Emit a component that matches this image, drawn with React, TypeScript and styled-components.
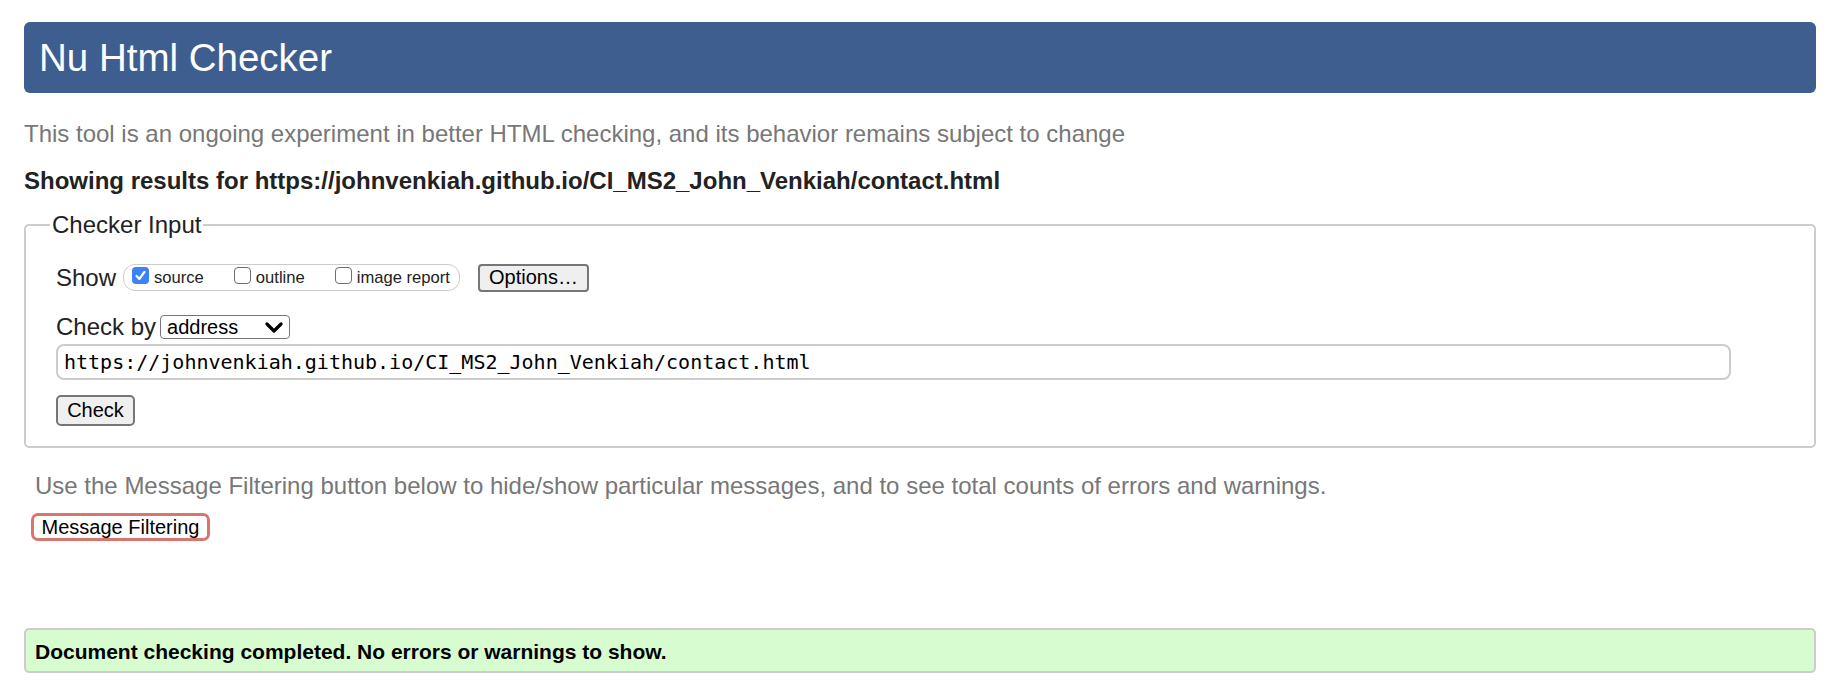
import React from 'react';
import styled, { createGlobalStyle } from 'styled-components';

const GlobalStyle = createGlobalStyle`
  html, body {
    margin: 0;
    background: #fff;
  }
  body {
    font-family: "Liberation Sans", Arial, Helvetica, sans-serif;
    color: #222;
  }
`;

const Page = styled.main`
  padding: 22px 18px 0 24px;
`;

const Header = styled.header`
  display: flex;
  align-items: center;
  height: 71px;
  padding-left: 15px;
  background: #3d5e8f;
  border-radius: 6px;
`;

const Title = styled.h1`
  margin: 0;
  font-size: 38.5px;
  font-weight: normal;
  color: #fff;
`;

const Text = styled.p<{ $bold?: boolean; $muted?: boolean; $top: number; $indent?: number }>`
  margin: ${(p) => p.$top}px 0 0;
  padding-left: ${(p) => p.$indent ?? 0}px;
  font-size: 24px;
  line-height: 26px;
  font-weight: ${(p) => (p.$bold ? 700 : 400)};
  color: ${(p) => (p.$muted ? '#777' : '#222')};
`;

const Fieldset = styled.fieldset`
  margin: 18px 0 0;
  padding: 25px 18px 20px 30px;
  min-width: 0;
  border: 2px solid #ccc;
  border-radius: 5px;
`;

const Legend = styled.legend`
  margin-left: -6px;
  padding: 0 2px;
  font-size: 24px;
  line-height: 26px;
  color: #222;
`;

const Row = styled.div<{ $top?: number; $height: number }>`
  display: flex;
  align-items: center;
  height: ${(p) => p.$height}px;
  margin-top: ${(p) => p.$top ?? 0}px;
`;

const Label = styled.span`
  font-size: 24px;
  line-height: 26px;
`;

const CheckGroup = styled.div`
  display: inline-flex;
  align-items: center;
  gap: 30px;
  box-sizing: border-box;
  height: 27px;
  margin-left: 7px;
  padding: 0 9px 0 8px;
  border: 1.5px solid #ccc;
  border-radius: 12px;
`;

const CheckLabel = styled.label`
  display: inline-flex;
  align-items: center;
  gap: 5px;
  font-size: 16.6px;
  line-height: 18px;
  color: #222;
`;

const Box = styled.span<{ $checked?: boolean }>`
  display: inline-flex;
  align-items: center;
  justify-content: center;
  box-sizing: border-box;
  width: 17px;
  height: 17px;
  margin-bottom: 5px;
  border-radius: 4px;
  border: ${(p) => (p.$checked ? 'none' : '1px solid #6e6e6e')};
  background: ${(p) => (p.$checked ? '#3b82f6' : '#fff')};
`;

const Button = styled.button<{ $height: number; $width: number; $radius?: number }>`
  box-sizing: border-box;
  width: ${(p) => p.$width}px;
  height: ${(p) => p.$height}px;
  padding: 0;
  border: 2px solid #767676;
  border-radius: ${(p) => p.$radius ?? 4}px;
  background: #efefef;
  font-family: inherit;
  font-size: 20px;
  color: #000;
`;

const OptionsButton = styled(Button)`
  margin-left: 18px;
`;

const Select = styled.div`
  display: inline-flex;
  align-items: center;
  justify-content: space-between;
  box-sizing: border-box;
  width: 130px;
  height: 24px;
  margin-left: 4px;
  padding: 0 6px 0 6px;
  border: 1.5px solid #767676;
  border-radius: 4px;
  font-size: 20px;
  color: #000;
`;

const UrlInput = styled.input`
  display: block;
  box-sizing: border-box;
  width: 1675px;
  height: 36px;
  margin-top: 4px;
  padding: 0 6px;
  border: 2px solid #ccc;
  border-radius: 8px;
  font-family: "DejaVu Sans Mono", Menlo, monospace;
  font-size: 20px;
  color: #000;
  outline: none;
`;

const CheckButton = styled(Button)`
  display: block;
  margin-top: 15px;
`;

const FilterButton = styled.button`
  display: block;
  box-sizing: border-box;
  width: 179px;
  height: 28px;
  margin: 14px 0 0 7px;
  padding: 0;
  border: 3px solid #d9756f;
  border-radius: 7px;
  background: #fff;
  font-family: inherit;
  font-size: 20px;
  color: #000;
`;

const Success = styled.div`
  box-sizing: border-box;
  height: 45px;
  margin-top: 87px;
  padding: 10px 9px 0;
  border: 2px solid #ccc;
  border-radius: 5px;
  background: #d7fcd0;
  font-size: 21px;
  line-height: 24px;
  font-weight: 700;
  color: #000;
`;

function Tick() {
  return (
    <svg width="13" height="13" viewBox="0 0 13 13">
      <path d="M2.5 7 L5.3 10 L10.5 2.8" fill="none" stroke="#fff" strokeWidth="2.2" strokeLinecap="round" strokeLinejoin="round" />
    </svg>
  );
}

function Chevron() {
  return (
    <svg width="18" height="11" viewBox="0 0 18 11">
      <path d="M2 2 L9 9 L16 2" fill="none" stroke="#000" strokeWidth="3.2" strokeLinecap="round" strokeLinejoin="round" />
    </svg>
  );
}

const SHOW_OPTIONS = [
  { label: 'source', checked: true },
  { label: 'outline', checked: false },
  { label: 'image report', checked: false },
];

const URL = 'https://johnvenkiah.github.io/CI_MS2_John_Venkiah/contact.html';

export default function App() {
  return (
    <Page>
      <GlobalStyle />
      <Header>
        <Title>Nu Html Checker</Title>
      </Header>

      <Text $muted $top={28}>
        This tool is an ongoing experiment in better HTML checking, and its behavior remains subject to change
      </Text>
      <Text $bold $top={21}>Showing results for {URL}</Text>

      <Fieldset>
        <Legend>Checker Input</Legend>

        <Row $height={29}>
          <Label>Show</Label>
          <CheckGroup>
            {SHOW_OPTIONS.map((o) => (
              <CheckLabel key={o.label}>
                <Box $checked={o.checked}>{o.checked && <Tick />}</Box>
                {o.label}
              </CheckLabel>
            ))}
          </CheckGroup>
          <OptionsButton $width={111} $height={28}>Options…</OptionsButton>
        </Row>

        <Row $top={22} $height={26}>
          <Label>Check by</Label>
          <Select>
            address
            <Chevron />
          </Select>
        </Row>

        <UrlInput readOnly value={URL} />

        <CheckButton $width={79} $height={31} $radius={5}>Check</CheckButton>
      </Fieldset>

      <Text $muted $top={25} $indent={11}>
        Use the Message Filtering button below to hide/show particular messages, and to see total counts of errors and warnings.
      </Text>
      <FilterButton>Message Filtering</FilterButton>

      <Success>Document checking completed. No errors or warnings to show.</Success>
    </Page>
  );
}
